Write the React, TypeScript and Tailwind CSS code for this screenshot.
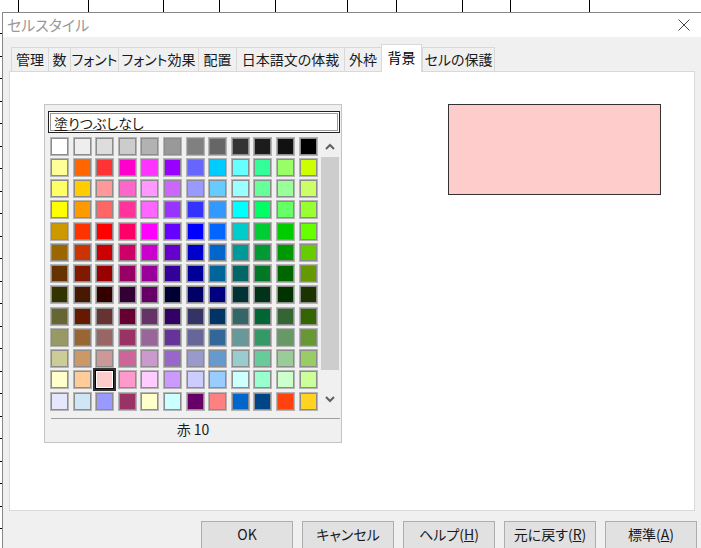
import React from 'react';

const PALETTE: string[][] = [
  ['#FFFFFF', '#EEEEEE', '#DDDDDD', '#CCCCCC', '#B2B2B2', '#999999', '#808080', '#666666', '#333333', '#1C1C1C', '#111111', '#000000'],
  ['#FFFF99', '#FF6600', '#FF3333', '#FF00CC', '#FF33FF', '#9900FF', '#6666FF', '#00CCFF', '#66FFFF', '#33FF99', '#99FF66', '#CCFF00'],
  ['#FFFF66', '#FFCC00', '#FF9999', '#FF66CC', '#FF99FF', '#CC66FF', '#9999FF', '#66CCFF', '#99FFFF', '#66FF99', '#99FF99', '#CCFF66'],
  ['#FFFF00', '#FF9900', '#FF6666', '#FF3399', '#FF66FF', '#9933FF', '#3333FF', '#3399FF', '#00FFFF', '#00FF66', '#66FF66', '#99FF33'],
  ['#CC9900', '#FF3300', '#FF0000', '#FF0066', '#FF00FF', '#6600FF', '#0000FF', '#0066FF', '#00CCCC', '#00CC33', '#00CC00', '#66FF00'],
  ['#996600', '#CC3300', '#CC0000', '#CC0066', '#CC00CC', '#6600CC', '#0000CC', '#0066CC', '#009999', '#009933', '#009900', '#66CC00'],
  ['#663300', '#801900', '#990000', '#990066', '#990099', '#330099', '#000099', '#006699', '#006666', '#007826', '#006600', '#669900'],
  ['#333300', '#461900', '#330000', '#330033', '#660066', '#000033', '#000066', '#000080', '#003333', '#00331A', '#003300', '#1A3300'],
  ['#666633', '#661900', '#663333', '#660033', '#663366', '#330066', '#333366', '#003366', '#336666', '#006633', '#336633', '#336600'],
  ['#999966', '#996633', '#996666', '#993366', '#996699', '#663399', '#666699', '#336699', '#669999', '#339966', '#669966', '#669933'],
  ['#CCCC99', '#CC9966', '#CC9999', '#CC6699', '#CC99CC', '#9966CC', '#9999CC', '#6699CC', '#99CCCC', '#66CC99', '#99CC99', '#99CC66'],
  ['#FFFFCC', '#FFCC99', '#FFCCCC', '#FF99CC', '#FFCCFF', '#CC99FF', '#CCCCFF', '#99CCFF', '#CCFFFF', '#99FFCC', '#CCFFCC', '#CCFF99'],
  ['#E6E6FF', '#CFE7F5', '#9999FF', '#993366', '#FFFFCC', '#CCFFFF', '#660066', '#FF8080', '#0066CC', '#004586', '#FF420E', '#FFD320'],
];

const TABS = [
  { label: '管理', w: 'w-[37px]' },
  { label: '数', w: 'w-[22px]' },
  { label: 'フォント', w: 'w-[48px]' },
  { label: 'フォント効果', w: 'w-[80px]' },
  { label: '配置', w: 'w-[38px]' },
  { label: '日本語文の体裁', w: 'w-[108px]' },
  { label: '外枠', w: 'w-[37px]' },
  { label: '背景', w: 'w-[41px]', active: true },
  { label: 'セルの保護', w: 'w-[73px]' },
];

// columns of the spreadsheet peeking out above the dialog
const SHEET_COLS = ['w-[19px]', 'w-[70px]', 'w-[75px]', 'w-[56px]', 'w-[56px]', 'w-[72px]', 'w-[49px]', 'w-[66px]', 'w-[48px]', 'w-[79px]'];

const Chevron = ({ up }: { up?: boolean }) => (
  <svg width="10" height="7" viewBox="0 0 10 7">
    <path d={up ? 'M1 6 L5 2 L9 6' : 'M1 1 L5 5 L9 1'} fill="none" stroke="#606060" strokeWidth="2" />
  </svg>
);

const Swatch = ({ color, selected }: { color: string; selected?: boolean }) =>
  selected ? (
    <div
      className="w-[19px] h-[19px] border border-black outline-2 outline-[#333] shadow-[inset_0_0_0_1px_#ffffff]"
      style={{ background: color }}
    />
  ) : (
    <div
      className="w-[19px] h-[19px] border border-[#b4b4b4] shadow-[inset_0_0_0_1px_#8c8c8c]"
      style={{ background: color }}
    />
  );

const ColorPalette = () => (
  <div className="w-[298px] h-[339px] border border-[#c4c4c4] bg-[#f0f0f0] flex flex-col pt-[6px]">
    <div className="ml-[3px] w-[292px] h-[22px] border border-[#222] bg-white p-px">
      <div className="h-full border border-[#9a9a9a] pl-[3px] leading-[18px]">塗りつぶしなし</div>
    </div>
    <div className="flex mt-[3px]">
      <div className="ml-[5px] mt-[0.7px] grid grid-cols-[repeat(12,19px)] gap-x-[3.6px] gap-y-[2.25px]">
        {PALETTE.map((row, r) =>
          row.map((c, i) => <Swatch key={`${r}-${i}`} color={c} selected={r === 11 && i === 2} />)
        )}
      </div>
      <div className="ml-[3px] w-[18px] h-[274px] flex flex-col">
        <div className="h-[20px] flex items-center justify-center">
          <Chevron up />
        </div>
        <div className="flex-1 pt-px">
          <div className="h-[213px] bg-[#cdcdcd]" />
        </div>
        <div className="h-[22px] flex items-center justify-center">
          <Chevron />
        </div>
      </div>
    </div>
    <div className="mt-[7px] ml-[6px] mr-px border-t border-[#a0a0a0]" />
    <div className="flex-1 flex items-center justify-center pb-px">赤&nbsp;10</div>
  </div>
);

export default function App() {
  return (
    <div className="w-[701px] h-[548px] overflow-hidden bg-white flex flex-col text-[14px] text-[#1a1a1a] font-['Noto_Sans_CJK_JP','Noto_Sans',sans-serif] [font-feature-settings:'palt']">
      <div className="h-[12px] flex shrink-0">
        {SHEET_COLS.map((w, i) => (
          <div key={i} className={`${w} h-full border-r border-black`} />
        ))}
      </div>
      <div className="flex flex-1 min-h-0">
        <div className="w-[2px] flex flex-col">
          <div className="h-[22px] border-b border-black shrink-0" />
          {Array.from({ length: 24 }).map((_, i) => (
            <div key={i} className="h-[22.5px] border-b border-black shrink-0" />
          ))}
        </div>
        <div className="flex-1 flex flex-col border-l border-t border-[#888]">
          <div className="h-[24px] bg-white flex items-center justify-between pl-[4px] pr-[11px] shrink-0">
            <span className="text-[15px] text-[#999]">セルスタイル</span>
            <svg width="12" height="12" viewBox="0 0 12 12">
              <path d="M0.5 0.5 L11.5 11.5 M11.5 0.5 L0.5 11.5" stroke="#444" strokeWidth="1" />
            </svg>
          </div>
          <div className="flex-1 bg-[#f0f0f0] flex flex-col px-[6px] pt-[6px]">
            <div className="flex items-end pl-[2px] h-[28px] shrink-0">
              {TABS.map((t) =>
                t.active ? (
                  <div
                    key={t.label}
                    className={`${t.w} h-[28px] -mb-px bg-white border-x border-t border-[#d9d9d9] flex items-center justify-center pb-[2px] text-black relative z-10`}
                  >
                    {t.label}
                  </div>
                ) : (
                  <div
                    key={t.label}
                    className={`${t.w} h-[24px] bg-[#f0f0f0] border-l border-t border-[#d9d9d9] last:border-r flex items-center justify-center`}
                  >
                    {t.label}
                  </div>
                )
              )}
            </div>
            <div className="h-[440px] shrink-0 bg-white border border-[#d9d9d9] flex items-start pt-[32px] pl-[34px]">
              <ColorPalette />
              <div className="ml-[106px] w-[213px] h-[91px] bg-[#FFCCCC] border border-[#333]" />
            </div>
            <div className="flex justify-end gap-[9px] mt-[10px] mr-[-2px]">
              {['OK', 'キャンセル', 'ヘルプ(H)', '元に戻す(R)', '標準(A)'].map((b) => (
                <div
                  key={b}
                  className="w-[92px] h-[32px] shrink-0 bg-[#e1e1e1] border border-[#adadad] flex items-start justify-center pt-[2px]"
                >
                  {b.includes('(') ? (
                    <span>
                      {b.slice(0, b.indexOf('(') + 1)}
                      <span className="underline">{b.charAt(b.indexOf('(') + 1)}</span>)
                    </span>
                  ) : (
                    b
                  )}
                </div>
              ))}
            </div>
          </div>
        </div>
      </div>
    </div>
  );
}
